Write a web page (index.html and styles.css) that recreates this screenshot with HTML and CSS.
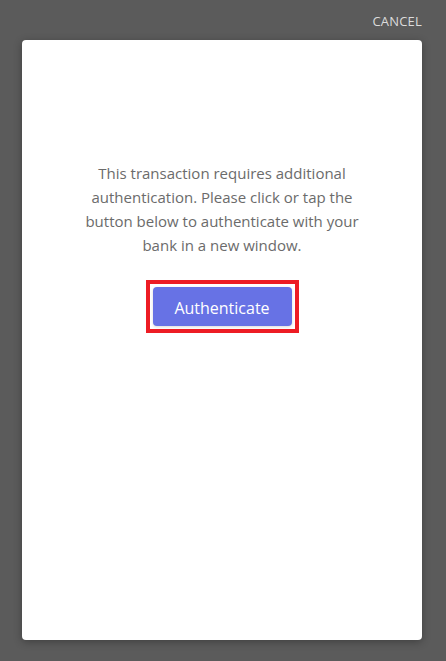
FILE: index.html
```html
<!DOCTYPE html>
<html lang="en">

<head>
    <meta charset="UTF-8">
    <meta name="viewport" content="width=device-width, initial-scale=1.0">
    <title>Authentication</title>
    <link rel="stylesheet" href="styles.css">
</head>

<body>
    <div class="topBar">
        <button class="cancelBtn">CANCEL</button>
    </div>
    <div class="card">
        <p class="message">This transaction requires additional authentication. Please click or tap the button below to authenticate with your bank in a new window.</p>
        <div class="highlight">
            <button class="authBtn">Authenticate</button>
        </div>
    </div>
</body>

</html>
```

FILE: styles.css
```css
body {
    margin: 0;
    height: 661px;
    background: #5b5b5b;
    font-family: "Open Sans", "Noto Sans", sans-serif;
    display: flex;
    flex-direction: column;
    padding-left: 22px;
}

.topBar {
    width: 400px;
    height: 40px;
    display: flex;
    justify-content: flex-end;
    align-items: center;
}

.cancelBtn {
    background: none;
    border: none;
    padding: 0;
    margin-top: 2px;
    color: #dcdcdc;
    font-family: inherit;
    font-size: 13px;
    letter-spacing: 0.2px;
}

.card {
    box-sizing: border-box;
    width: 400px;
    height: 600px;
    background: #fff;
    border-radius: 4px;
    box-shadow: 0 2px 8px rgba(0, 0, 0, 0.3);
    display: flex;
    flex-direction: column;
    align-items: center;
    padding-top: 121px;
}

.message {
    margin: 0;
    width: 300px;
    text-align: center;
    color: #6b6b6b;
    font-size: 15px;
    line-height: 24px;
}

/* red box drawn round the button */
.highlight {
    display: flex;
    margin-top: 23px;
    padding: 3px;
    border: 4px solid #ed1c24;
}

.authBtn {
    width: 139px;
    height: 39px;
    padding-top: 3px;
    background: #6772e5;
    color: #fff;
    border: none;
    border-radius: 4px;
    font-family: inherit;
    font-size: 16px;
    box-shadow: 0 1px 3px rgba(0, 0, 0, 0.15);
}
```
